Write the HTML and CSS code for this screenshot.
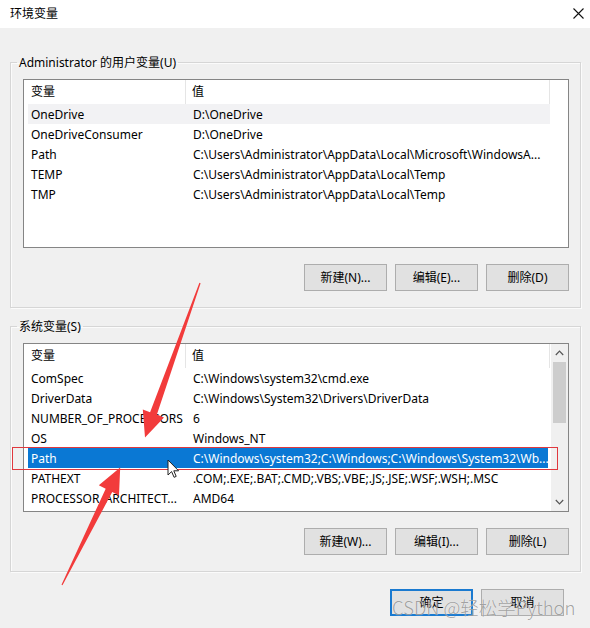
FILE: index.html
```html
<!DOCTYPE html>
<html lang="zh-CN">
<head>
<meta charset="utf-8">
<title>环境变量</title>
<link rel="stylesheet" href="styles.css">
</head>
<body>
<div class="window">
  <div class="titlebar">
    <span class="title">环境变量</span>
    <svg class="close" width="11" height="11" viewBox="0 0 11 11"><path d="M0.5 0.5 L10.5 10.5 M10.5 0.5 L0.5 10.5" stroke="#111" stroke-width="1.1" fill="none"/></svg>
  </div>
  <div class="content">
    <fieldset class="group">
      <legend>Administrator 的用户变量(U)</legend>
      <div class="list">
        <div class="list-main">
          <div class="header"><div class="hcell c1">变量</div><div class="hcell c2">值</div></div>
          <div class="row hover"><div class="cell">OneDrive</div><div class="cell">D:\OneDrive</div></div>
          <div class="row"><div class="cell">OneDriveConsumer</div><div class="cell">D:\OneDrive</div></div>
          <div class="row"><div class="cell">Path</div><div class="cell">C:\Users\Administrator\AppData\Local\Microsoft\WindowsA...</div></div>
          <div class="row"><div class="cell">TEMP</div><div class="cell">C:\Users\Administrator\AppData\Local\Temp</div></div>
          <div class="row"><div class="cell">TMP</div><div class="cell">C:\Users\Administrator\AppData\Local\Temp</div></div>
        </div>
      </div>
      <div class="buttons">
        <button class="btn">新建(N)...</button>
        <button class="btn">编辑(E)...</button>
        <button class="btn">删除(D)</button>
      </div>
    </fieldset>
    <fieldset class="group sys">
      <legend>系统变量(S)</legend>
      <div class="list">
        <div class="list-main">
          <div class="header"><div class="hcell c1">变量</div><div class="hcell c2">值</div></div>
          <div class="row"><div class="cell">ComSpec</div><div class="cell">C:\Windows\system32\cmd.exe</div></div>
          <div class="row"><div class="cell">DriverData</div><div class="cell">C:\Windows\System32\Drivers\DriverData</div></div>
          <div class="row"><div class="cell">NUMBER_OF_PROCESSORS</div><div class="cell">6</div></div>
          <div class="row"><div class="cell">OS</div><div class="cell">Windows_NT</div></div>
          <div class="row selected"><div class="cell">Path</div><div class="cell">C:\Windows\system32;C:\Windows;C:\Windows\System32\Wb...</div></div>
          <div class="row"><div class="cell">PATHEXT</div><div class="cell">.COM;.EXE;.BAT;.CMD;.VBS;.VBE;.JS;.JSE;.WSF;.WSH;.MSC</div></div>
          <div class="row"><div class="cell">PROCESSOR_ARCHITECT...</div><div class="cell">AMD64</div></div>
        </div>
        <div class="scrollbar">
          <svg class="sarrow" width="9" height="6" viewBox="0 0 9 6"><path d="M0.8 5 L4.5 1.2 L8.2 5" stroke="#555" stroke-width="1.2" fill="none"/></svg>
          <div class="track"><div class="thumb"></div></div>
          <svg class="sarrow" width="9" height="6" viewBox="0 0 9 6"><path d="M0.8 1 L4.5 4.8 L8.2 1" stroke="#555" stroke-width="1.2" fill="none"/></svg>
        </div>
      </div>
      <div class="buttons">
        <button class="btn">新建(W)...</button>
        <button class="btn">编辑(I)...</button>
        <button class="btn">删除(L)</button>
      </div>
    </fieldset>
    <div class="footer">
      <button class="btn default">确定</button>
      <button class="btn">取消</button>
    </div>
  </div>

  <div class="redbox"></div>
  <svg class="arrows" width="590" height="628" viewBox="0 0 590 628">
    <polygon fill="#f23b3b" points="200.6,283.2 156.9,414.6 164,417.4 145,437.5 142.8,409.5 150.1,412.3 199.4,282.8"/>
    <polygon fill="#f23b3b" points="62.5,585.2 112.2,492.1 119,495.5 120.2,467.5 98.8,485.3 105.7,488.7 61.5,584.8"/>
  </svg>
  <svg class="cursor" width="13" height="20" viewBox="0 0 13 20"><path d="M1 1 L1 16 L4.6 12.6 L7.1 18.3 L9.2 17.4 L6.8 11.8 L11.6 11.8 Z" fill="#fff" stroke="#222" stroke-width="1" stroke-linejoin="round"/></svg>
  <div class="watermark">CSDN @轻松学Python</div>
</div>
</body>
</html>
```
FILE: styles.css
```css
* { box-sizing: border-box; }
html, body { margin: 0; padding: 0; }
body {
  width: 590px;
  height: 628px;
  overflow: hidden;
  background: #f0f0f0;
}
.window {
  position: relative;
  width: 590px;
  height: 628px;
  background: #f0f0f0;
  font-family: "Noto Sans", "Noto Sans CJK SC", sans-serif;
  font-size: 12px;
  color: #000;
}
.titlebar {
  height: 28px;
  background: #fff;
  display: flex;
  align-items: center;
  justify-content: space-between;
  padding: 0 6px 0 10px;
}
.title {
  font-family: "Noto Sans CJK SC", sans-serif;
  font-size: 12px;
  line-height: 16px;
  margin-top: -2px;
}
.close { display: block; margin-top: -2px; }
.content {
  padding: 26px 9px 0 10px;
  display: flex;
  flex-direction: column;
}
.group {
  margin: 0;
  border: 1px solid #d6d6d6;
  box-shadow: inset 1px 1px 0 #fbfbfb, 1px 1px 0 #fbfbfb;
  padding: 8px 11px 16px 12px;
  min-width: 0;
}
.group.sys { margin-top: 10px; }
.group legend {
  padding: 0 2px;
  margin-left: -6px;
  line-height: 17px;
  font-size: 12px;
}
.list {
  height: 169px;
  border: 1px solid #858585;
  background: #fff;
  display: flex;
}
.list-main {
  flex: 1;
  min-width: 0;
}
.header {
  height: 24px;
  display: grid;
  grid-template-columns: 162px 364px;
}
.hcell {
  padding-left: 7px;
  line-height: 22px;
  padding-top: 1px;
  white-space: nowrap;
}
.hcell.c1 { border-right: 1px solid #e5e5e5; }
.hcell.c2 { padding-left: 6px; border-right: 1px solid #e5e5e5; }
.row {
  height: 20px;
  margin-left: 4px;
  width: 522px;
  display: grid;
  grid-template-columns: 158px 364px;
  line-height: 19px;
  white-space: nowrap;
}
.row .cell {
  overflow: hidden;
  padding-left: 3px;
  padding-top: 1px;
}
.row .cell + .cell { padding-left: 7px; }
.row.hover { background: #f2f2f4; }
.row.selected {
  background: #0a78d4;
  color: #fff;
  width: 520px;
  height: 20px;
}
.scrollbar {
  width: 17px;
  background: #f0f0f0;
  display: flex;
  flex-direction: column;
  align-items: center;
}
.sarrow { display: block; margin: 6px 0 6px; flex: none; }
.track {
  flex: 1;
  width: 100%;
  padding: 0 2px;
}
.thumb {
  height: 61px;
  margin-top: 0;
  background: #cdcdcd;
}
.buttons {
  margin-top: 16px;
  display: flex;
  justify-content: flex-end;
  gap: 8px;
}
.btn {
  width: 83px;
  height: 27px;
  padding: 0;
  background: #e1e1e1;
  border: 1px solid #adadad;
  font-family: "Noto Sans", "Noto Sans CJK SC", sans-serif;
  font-size: 12px;
  color: #000;
  line-height: 23px;
}
.btn.default {
  border: 2px solid #1a7ad0;
}
.footer {
  margin-top: 17px;
  display: flex;
  justify-content: flex-end;
  gap: 8px;
  padding-right: 17px;
}
.redbox {
  position: absolute;
  left: 12px;
  top: 447px;
  width: 546px;
  height: 23px;
  border: 1px solid #e0383e;
}
.arrows {
  position: absolute;
  left: 0;
  top: 0;
  pointer-events: none;
}
.cursor {
  position: absolute;
  left: 167px;
  top: 459px;
}
.watermark {
  position: absolute;
  left: 392px;
  top: 595px;
  font-family: "Noto Sans CJK SC", sans-serif;
  font-weight: 300;
  font-size: 18.5px;
  line-height: 24px;
  color: rgba(105, 105, 105, 0.62);
  text-shadow: 0 0 1px rgba(255,255,255,0.9);
  white-space: nowrap;
}
```
